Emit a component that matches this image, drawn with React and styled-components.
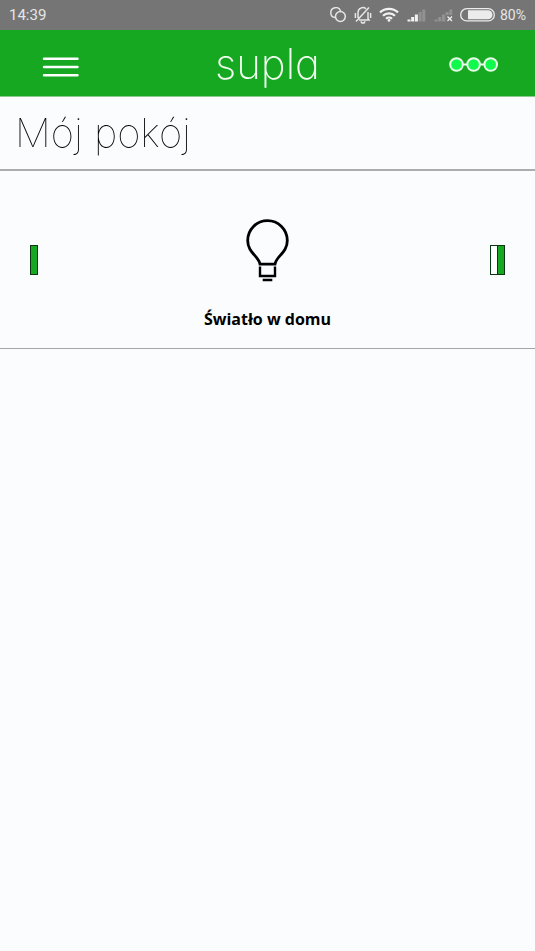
import React from "react";
import styled, { createGlobalStyle } from "styled-components";

const GlobalStyle = createGlobalStyle`
  *, *::before, *::after { box-sizing: border-box; }
  body {
    margin: 0;
    background: #fafcfd;
    color: #000;
    font-family: "Open Sans", sans-serif;
    -webkit-font-smoothing: antialiased;
  }
`;

const Screen = styled.div`
  display: flex;
  flex-direction: column;
  min-height: 100vh;
`;

const StatusBar = styled.div`
  display: flex;
  align-items: center;
  justify-content: space-between;
  height: 30px;
  padding: 0 9px;
  background: #757575;
  color: #e6e6e6;
  font: 400 15px/30px Roboto, sans-serif;
`;

const StatusIcons = styled.div`
  display: flex;
  align-items: center;
`;

const StatusIcon = styled.svg`
  display: block;
  flex: none;
  margin-right: ${(p) => p.$gap}px;
`;

const Level = styled.span`
  font-size: 14px;
`;

const Header = styled.header`
  display: grid;
  grid-template-columns: 1fr auto 1fr;
  align-items: center;
  height: 67px;
  padding: 0 37px;
  background: #16a821;
  border-bottom: 1px solid #8bc990;
`;

const IconButton = styled.button`
  display: flex;
  justify-self: ${(p) => p.$side};
  padding: 8px 0 0 5px;
  border: 0;
  background: none;
  cursor: pointer;
`;

const Brand = styled.div`
  padding-top: 2px;
  color: #f2fff2;
  font: 200 42px/64px Inter, sans-serif;
  font-feature-settings: "cv11";
  will-change: opacity;
`;

const Section = styled.h1`
  margin: 0;
  padding: 0 15px;
  border-bottom: 2px solid #adadad;
  font: 100 40px/72px Inter, sans-serif;
  will-change: opacity;
`;

const Channel = styled.article`
  display: grid;
  grid-template-columns: 1fr auto 1fr;
  align-items: center;
  height: 178px;
  padding: 0 30px;
  border-bottom: 1px solid #a6a6a8;
`;

const Device = styled.div`
  display: flex;
  flex-direction: column;
  align-items: center;
  gap: 24px;
  padding-top: 30px;
`;

const DeviceName = styled.h2`
  margin: 0;
  font: 700 16px/24px "Open Sans", sans-serif;
`;

const Indicator = styled.div`
  display: flex;
  justify-self: ${(p) => p.$side};
`;

const Bar = styled.span`
  width: 8px;
  height: 30px;
  border: 1px solid #0b3510;
  background: ${(p) => (p.$on ? "#16a821" : "#fff")};

  & + & { margin-left: -1px; }
`;

function LinkIcon() {
  return (
    <StatusIcon $gap={7} width="17" height="16" viewBox="0 0 17 16" fill="none" stroke="#e6e6e6" strokeWidth="1.5">
      <path d="M5.2 10.6A5 5 0 1 1 10.6 4.2" />
      <circle cx="10.4" cy="9.5" r="4.9" />
    </StatusIcon>
  );
}

function MutedBellIcon() {
  return (
    <StatusIcon $gap={7} width="18" height="18" viewBox="0 0 18 18" fill="none" stroke="#e6e6e6" strokeWidth="1.5">
      <path d="M4 12V6.5a4.8 4.8 0 0 1 8-3.6M14 6v6.5l1 1.5H5M7.2 15.2a1.8 1.8 0 0 0 3.6 0M1.4 7v5M16.6 7v5M2 15.5 15 1.5" />
    </StatusIcon>
  );
}

function WifiIcon() {
  return (
    <StatusIcon $gap={8} width="20" height="16" viewBox="0 0 20 16" fill="none" stroke="#f2f2f2" strokeWidth="2.2">
      <path d="M1 5.4a13 13 0 0 1 18 0M4 8.8a8.6 8.6 0 0 1 12 0M7 11.8a4.4 4.4 0 0 1 6 0" />
      <circle cx="10" cy="13.4" r="1.4" fill="#f2f2f2" stroke="none" />
    </StatusIcon>
  );
}

function SignalIcon({ lit, gap, missing }) {
  return (
    <StatusIcon $gap={gap} width="19" height="14" viewBox="0 0 19 14">
      {[0, 1, 2, 3, 4].map((i) => (
        <rect
          key={i}
          x={0.5 + i * 3.7}
          y={11.5 - i * 2.5}
          width="3"
          height={2 + i * 2.5}
          fill={i < lit ? "#f2f2f2" : "#929292"}
        />
      ))}
      {missing && (
        <>
          <rect x="12" y="7" width="7" height="7" fill="#757575" />
          <path d="m13.5 8.5 4.5 4.5m0-4.5-4.5 4.5" stroke="#f2f2f2" strokeWidth="1.2" />
        </>
      )}
    </StatusIcon>
  );
}

function BatteryIcon() {
  return (
    <StatusIcon $gap={5} width="35" height="14" viewBox="0 0 35 14">
      <rect x="0.7" y="0.7" width="33.6" height="12.2" rx="6" fill="none" stroke="#ececec" strokeWidth="1.3" />
      <path d="M8 2.3h20a4.5 4.5 0 0 1 0 9H8z" fill="#ececec" />
    </StatusIcon>
  );
}

function MenuIcon() {
  return (
    <svg width="37" height="22" viewBox="0 0 37 22" stroke="#fff" strokeWidth="2.4" strokeLinecap="round">
      <path d="M2 2.8h33.5M2 11h33.5M2 19.2h33.5" />
    </svg>
  );
}

function NodesIcon() {
  return (
    <svg width="49" height="22" viewBox="0 0 49 22" fill="#10fa4c" stroke="#e9fbe9" strokeWidth="2">
      <path d="M8 8.5h34" />
      <circle cx="7.5" cy="8.5" r="6.3" />
      <circle cx="24.6" cy="8.5" r="6.3" />
      <circle cx="41.7" cy="8.5" r="6.3" />
    </svg>
  );
}

function BulbIcon() {
  return (
    <svg width="44" height="64" viewBox="0 0 44 64" fill="none" stroke="#000" strokeWidth="2.8">
      <path d="M14 45.2C12.8 37 1.7 34 1.7 21.4a19.8 19.8 0 0 1 39.6 0C41.3 34 30.2 37 29 45.2Z" />
      <path d="M14 47.6v9.4h15v-9.4M16.7 61h9.6" strokeWidth="2.4" />
    </svg>
  );
}

export default function App() {
  return (
    <Screen>
      <GlobalStyle />
      <StatusBar>
        <time>14:39</time>
        <StatusIcons>
          <LinkIcon />
          <MutedBellIcon />
          <WifiIcon />
          <SignalIcon lit={3} gap={8} />
          <SignalIcon lit={0} gap={7} missing />
          <BatteryIcon />
          <Level>80%</Level>
        </StatusIcons>
      </StatusBar>
      <Header>
        <IconButton $side="start" aria-label="Menu">
          <MenuIcon />
        </IconButton>
        <Brand>supla</Brand>
        <IconButton $side="end" aria-label="Status">
          <NodesIcon />
        </IconButton>
      </Header>
      <main>
        <Section>Mój pokój</Section>
        <Channel>
          <Indicator $side="start">
            <Bar $on />
          </Indicator>
          <Device>
            <BulbIcon />
            <DeviceName>Światło w domu</DeviceName>
          </Device>
          <Indicator $side="end">
            <Bar />
            <Bar $on />
          </Indicator>
        </Channel>
      </main>
    </Screen>
  );
}
